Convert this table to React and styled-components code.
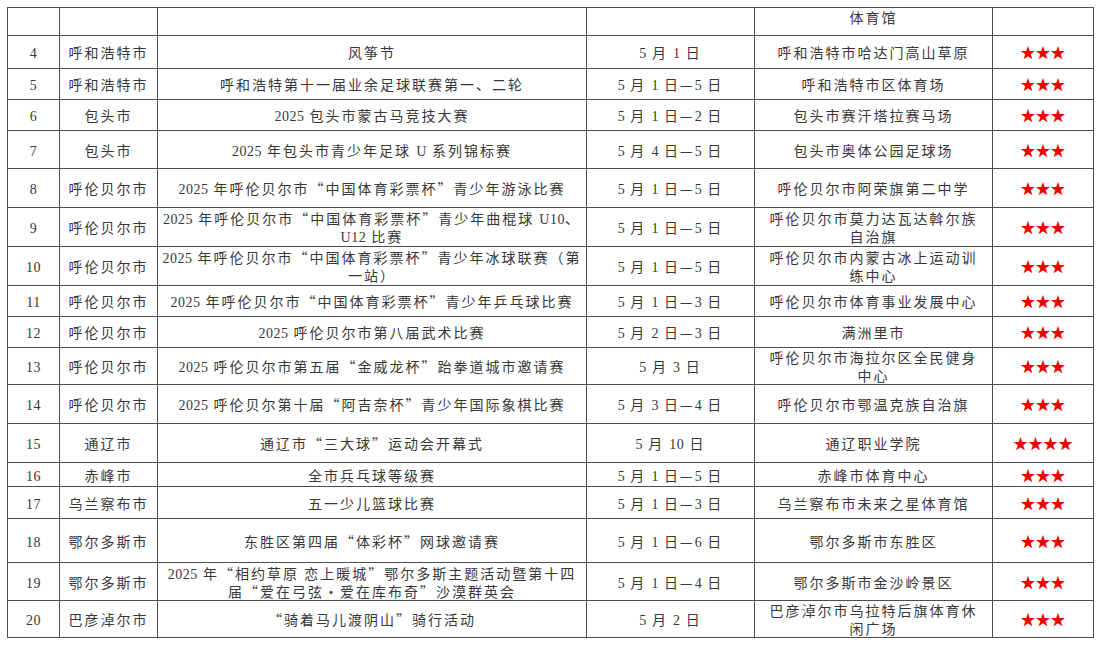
import React from "react";
import styled, { createGlobalStyle } from "styled-components";

const GlobalStyle = createGlobalStyle`
  html, body {
    margin: 0;
    padding: 0;
    background: #fff;
  }
  body {
    padding: 7px 0 0 7px;
    font-family: "Noto Sans CJK SC", sans-serif;
    color: #383838;
  }
`;

const Table = styled.table`
  border-collapse: collapse;
  table-layout: fixed;
  width: 1086px;
  font-size: 14px;
  letter-spacing: 2px;
  line-height: 18px;
`;

const Row = styled.tr`
  height: ${(p) => p.$h}px;
`;

const Cell = styled.td`
  border: 1px solid #4d4d4d;
  padding: 0 2px;
  text-align: center;
  vertical-align: ${(p) => (p.$top ? "top" : "middle")};
  white-space: nowrap;
  overflow: hidden;
`;

const Latin = styled.span`
  font-family: "Liberation Serif", serif;
  letter-spacing: 0.5px;
  line-height: 1;
`;

const Stars = styled.span`
  color: #f00000;
  font-size: 15px;
  letter-spacing: 0;
  line-height: 1;
`;

function rich(text) {
  return text.split(/([0-9A-Za-z]+)/).map((part, i) => {
    if (!part) return null;
    if (/^[0-9A-Za-z]+$/.test(part)) return <Latin key={i}>{part}</Latin>;
    return <React.Fragment key={i}>{part}</React.Fragment>;
  });
}

function Lines({ lines }) {
  return lines.map((l, i) => (
    <React.Fragment key={i}>
      {i > 0 && <br />}
      {rich(l)}
    </React.Fragment>
  ));
}

const rows = [
  { h: 33, n: "4", city: "呼和浩特市", event: ["风筝节"], date: "5 月 1 日", venue: ["呼和浩特市哈达门高山草原"] },
  { h: 31, n: "5", city: "呼和浩特市", event: ["呼和浩特第十一届业余足球联赛第一、二轮"], date: "5 月 1 日—5 日", venue: ["呼和浩特市区体育场"] },
  { h: 31, n: "6", city: "包头市", event: ["2025 包头市蒙古马竞技大赛"], date: "5 月 1 日—2 日", venue: ["包头市赛汗塔拉赛马场"] },
  { h: 38, n: "7", city: "包头市", event: ["2025 年包头市青少年足球 U 系列锦标赛"], date: "5 月 4 日—5 日", venue: ["包头市奥体公园足球场"] },
  { h: 39, n: "8", city: "呼伦贝尔市", event: ["2025 年呼伦贝尔市“中国体育彩票杯”青少年游泳比赛"], date: "5 月 1 日—5 日", venue: ["呼伦贝尔市阿荣旗第二中学"] },
  { h: 39, n: "9", city: "呼伦贝尔市", event: ["2025 年呼伦贝尔市“中国体育彩票杯”青少年曲棍球 U10、", "U12 比赛"], date: "5 月 1 日—5 日", venue: ["呼伦贝尔市莫力达瓦达斡尔族", "自治旗"] },
  { h: 39, n: "10", city: "呼伦贝尔市", event: ["2025 年呼伦贝尔市“中国体育彩票杯”青少年冰球联赛（第", "一站）"], date: "5 月 1 日—5 日", venue: ["呼伦贝尔市内蒙古冰上运动训", "练中心"] },
  { h: 31, n: "11", city: "呼伦贝尔市", event: ["2025 年呼伦贝尔市“中国体育彩票杯”青少年乒乓球比赛"], date: "5 月 1 日—3 日", venue: ["呼伦贝尔市体育事业发展中心"] },
  { h: 31, n: "12", city: "呼伦贝尔市", event: ["2025 呼伦贝尔市第八届武术比赛"], date: "5 月 2 日—3 日", venue: ["满洲里市"] },
  { h: 37, n: "13", city: "呼伦贝尔市", event: ["2025 呼伦贝尔市第五届“金威龙杯”跆拳道城市邀请赛"], date: "5 月 3 日", venue: ["呼伦贝尔市海拉尔区全民健身", "中心"] },
  { h: 39, n: "14", city: "呼伦贝尔市", event: ["2025 呼伦贝尔第十届“阿吉奈杯”青少年国际象棋比赛"], date: "5 月 3 日—4 日", venue: ["呼伦贝尔市鄂温克族自治旗"] },
  { h: 39, n: "15", city: "通辽市", event: ["通辽市“三大球”运动会开幕式"], date: "5 月 10 日", venue: ["通辽职业学院"], stars: 4 },
  { h: 24, n: "16", city: "赤峰市", event: ["全市兵乓球等级赛"], date: "5 月 1 日—5 日", venue: ["赤峰市体育中心"] },
  { h: 32, n: "17", city: "乌兰察布市", event: ["五一少儿篮球比赛"], date: "5 月 1 日—3 日", venue: ["乌兰察布市未来之星体育馆"] },
  { h: 44, n: "18", city: "鄂尔多斯市", event: ["东胜区第四届“体彩杯”网球邀请赛"], date: "5 月 1 日—6 日", venue: ["鄂尔多斯市东胜区"] },
  { h: 38, n: "19", city: "鄂尔多斯市", event: ["2025 年“相约草原 恋上暖城”鄂尔多斯主题活动暨第十四", "届“爱在弓弦•爱在库布奇”沙漠群英会"], date: "5 月 1 日—4 日", venue: ["鄂尔多斯市金沙岭景区"] },
  { h: 37, n: "20", city: "巴彦淖尔市", event: ["“骑着马儿渡阴山”骑行活动"], date: "5 月 2 日", venue: ["巴彦淖尔市乌拉特后旗体育休", "闲广场"] },
];

export default function App() {
  return (
    <>
      <GlobalStyle />
      <Table>
        <colgroup>
          <col style={{ width: 52 }} />
          <col style={{ width: 98 }} />
          <col style={{ width: 429 }} />
          <col style={{ width: 168 }} />
          <col style={{ width: 238 }} />
          <col style={{ width: 101 }} />
        </colgroup>
        <tbody>
          <Row $h={28}>
            <Cell />
            <Cell />
            <Cell />
            <Cell />
            <Cell $top>体育馆</Cell>
            <Cell />
          </Row>
          {rows.map((r) => (
            <Row key={r.n} $h={r.h}>
              <Cell>{rich(r.n)}</Cell>
              <Cell>{r.city}</Cell>
              <Cell>
                <Lines lines={r.event} />
              </Cell>
              <Cell>{rich(r.date)}</Cell>
              <Cell>
                <Lines lines={r.venue} />
              </Cell>
              <Cell>
                <Stars>{"★".repeat(r.stars || 3)}</Stars>
              </Cell>
            </Row>
          ))}
        </tbody>
      </Table>
    </>
  );
}
